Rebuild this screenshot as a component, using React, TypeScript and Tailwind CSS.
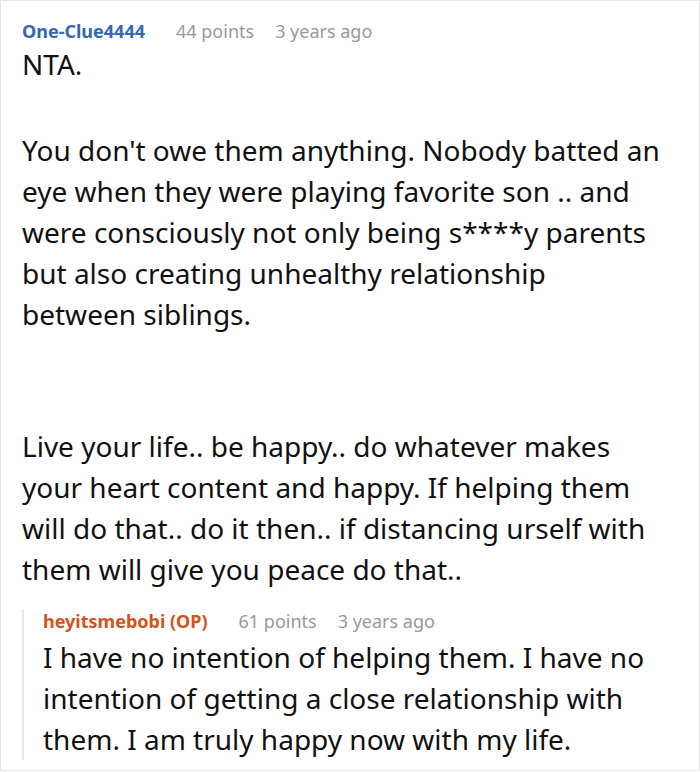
import React from "react";

const font = { fontFamily: '"Noto Sans", "Open Sans", sans-serif' };

const Meta: React.FC<{ name: string; points: string; age: string; op?: boolean }> = ({
  name,
  points,
  age,
  op,
}) => (
  <div className="flex items-center text-[18px] leading-[24px]">
    <span className={op ? "font-bold text-[#d5521a]" : "font-bold text-[#3467b4]"}>{name}</span>
    <span className="ml-[31px] text-[#999999]">{points}</span>
    <span className="ml-[21px] text-[#999999]">{age}</span>
  </div>
);

export default function App() {
  return (
    <div style={font} className="w-[700px] h-[772px] bg-white overflow-hidden">
      <div className="h-[771px] border border-[#e4e4e4] pl-[21px] pr-[38px] pt-[18px] text-[28px] leading-[41px] text-[#111111]">
        <Meta name="One-Clue4444" points="44 points" age="3 years ago" />
        <p className="mt-[1px]">NTA.</p>
        <p className="mt-[45px]">
          You don't owe them anything. Nobody batted an eye when they were playing favorite son .. and
          were consciously not only being s****y parents but also creating unhealthy relationship between
          siblings.
        </p>
        <p className="mt-[91px]">
          Live your life.. be happy.. do whatever makes your heart content and happy. If helping them
          will do that.. do it then.. if distancing urself with them will give you peace do that..
        </p>
        <div className="mt-[19px] border-l-2 border-[#e8e8e8] pl-[19px]">
          <Meta name="heyitsmebobi (OP)" points="61 points" age="3 years ago" op />
          <p className="mt-[4px]">
            I have no intention of helping them. I have no intention of getting a close relationship with
            them. I am truly happy now with my life.
          </p>
        </div>
      </div>
    </div>
  );
}
